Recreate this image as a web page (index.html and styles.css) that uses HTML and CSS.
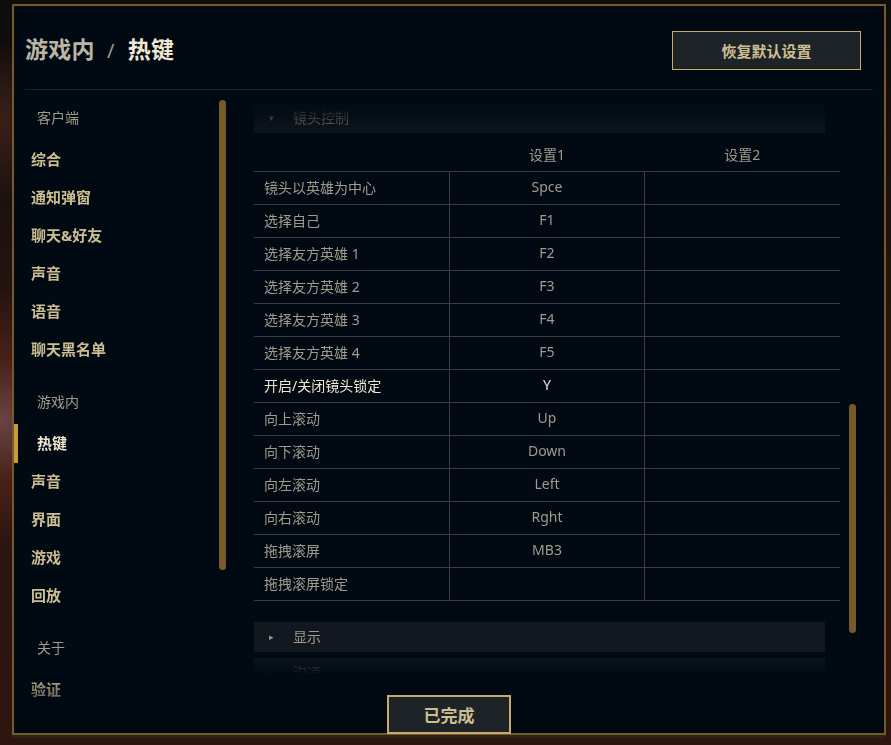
FILE: index.html
```html
<!DOCTYPE html>
<html lang="zh">

<head>
    <meta charset="UTF-8">
    <title>游戏内 / 热键</title>
    <link rel="stylesheet" href="styles.css">
</head>

<body>
    <div class="dialog">
        <header class="top">
            <h1><span class="crumb">游戏内</span><span class="sep">/</span><span class="current">热键</span></h1>
            <button class="btn-reset">恢复默认设置</button>
        </header>

        <div class="main">
            <nav class="side">
                <div class="side-list">
                    <div class="group">
                        <div class="group-title">客户端</div>
                        <div class="item">综合</div>
                        <div class="item">通知弹窗</div>
                        <div class="item">聊天&amp;好友</div>
                        <div class="item">声音</div>
                        <div class="item">语音</div>
                        <div class="item">聊天黑名单</div>
                    </div>
                    <div class="group">
                        <div class="group-title">游戏内</div>
                        <div class="item active">热键</div>
                        <div class="item">声音</div>
                        <div class="item">界面</div>
                        <div class="item">游戏</div>
                        <div class="item">回放</div>
                    </div>
                    <div class="group">
                        <div class="group-title">关于</div>
                        <div class="item">验证</div>
                    </div>
                </div>
                <div class="side-scroll"></div>
            </nav>

            <section class="content">
                <div class="content-scroll">
                    <div class="section-bar"><span class="arrow">▾</span>镜头控制</div>
                    <table class="keys">
                        <thead>
                            <tr><th></th><th>设置1</th><th>设置2</th></tr>
                        </thead>
                        <tbody>
                            <tr><td>镜头以英雄为中心</td><td>Spce</td><td></td></tr>
                            <tr><td>选择自己</td><td>F1</td><td></td></tr>
                            <tr><td>选择友方英雄 1</td><td>F2</td><td></td></tr>
                            <tr><td>选择友方英雄 2</td><td>F3</td><td></td></tr>
                            <tr><td>选择友方英雄 3</td><td>F4</td><td></td></tr>
                            <tr><td>选择友方英雄 4</td><td>F5</td><td></td></tr>
                            <tr class="hover"><td>开启/关闭镜头锁定</td><td>Y</td><td></td></tr>
                            <tr><td>向上滚动</td><td>Up</td><td></td></tr>
                            <tr><td>向下滚动</td><td>Down</td><td></td></tr>
                            <tr><td>向左滚动</td><td>Left</td><td></td></tr>
                            <tr><td>向右滚动</td><td>Rght</td><td></td></tr>
                            <tr><td>拖拽滚屏</td><td>MB3</td><td></td></tr>
                            <tr><td>拖拽滚屏锁定</td><td></td><td></td></tr>
                        </tbody>
                    </table>
                    <div class="section-bar closed"><span class="arrow">▸</span>显示</div>
                    <div class="section-bar closed next"><span class="arrow">▸</span>沟通</div>
                </div>
                <div class="content-scrollbar"></div>
            </section>
        </div>

        <button class="btn-done">已完成</button>
    </div>
</body>

</html>
```

FILE: styles.css
```css
body {
    margin: 0;
    width: 891px;
    height: 745px;
    overflow: hidden;
    font-family: "Noto Sans", "Noto Sans CJK SC", sans-serif;
    background:
        radial-gradient(circle at 0 420px, #6a4444 0, #4a2018 60px, transparent 130px),
        radial-gradient(circle at 0 120px, #3a2018 0, transparent 80px),
        linear-gradient(180deg, #0c0c0c 0, #24140f 40%, #2e1510 100%);
}

.dialog {
    position: relative;
    box-sizing: border-box;
    margin: 4px 0 0 12px;
    width: 874px;
    height: 731px;
    border: 2px solid #785a28;
    background: #010a13;
    box-shadow: 0 3px 0 #2c2216;
    display: flex;
    flex-direction: column;
}

/* cabecera */
.top {
    display: flex;
    align-items: center;
    justify-content: space-between;
    height: 83px;
    margin: 0 11px;
    border-bottom: 1px solid #1e2328;
}

.top h1 {
    margin: 0;
    font-size: 23px;
    font-weight: 700;
    letter-spacing: 0.3px;
}

.crumb {
    color: #bbb5a3;
}

.sep {
    color: #a09b8c;
    margin: 0 13px 0 12px;
    font-weight: 400;
    font-size: 20px;
}

.current {
    color: #f0e6d2;
}

.btn-reset {
    width: 189px;
    height: 39px;
    margin-right: 12px;
    margin-top: 5px;
    border: 1px solid #c8aa6e;
    background: #1e2328;
    color: #cdbe91;
    font-family: inherit;
    font-size: 15px;
    font-weight: 700;
}

/* cuerpo */
.main {
    flex: 1;
    display: flex;
    min-height: 0;
}

.side {
    width: 216px;
    display: flex;
}

.side-list {
    flex: 1;
    padding-top: 9px;
    -webkit-mask-image: linear-gradient(#000 calc(100% - 60px), rgba(0, 0, 0, 0.1) calc(100% - 15px));
    mask-image: linear-gradient(#000 calc(100% - 60px), rgba(0, 0, 0, 0.1) calc(100% - 15px));
}

.group {
    margin-bottom: 15px;
}

.group-title {
    height: 38px;
    line-height: 38px;
    margin-bottom: 3px;
    padding-left: 23px;
    font-size: 14px;
    color: #a09b8c;
}

.item {
    position: relative;
    height: 38px;
    line-height: 38px;
    padding-left: 17px;
    font-size: 15px;
    font-weight: 700;
    color: #cdbe91;
}

.item.active {
    padding-left: 23px;
    color: #f0e6d2;
}

.item.active::before {
    content: "";
    position: absolute;
    left: 0;
    top: 0;
    width: 4px;
    height: 39px;
    background: #c89b3c;
}

.side-scroll {
    width: 7px;
    height: 470px;
    margin: 10px 4px 0 0;
    border-radius: 4px;
    background: #785a28;
}

.content {
    flex: 1;
    display: flex;
    margin-left: 24px;
}

.content-scroll {
    width: 586px;
    height: 590px;
    padding-top: 13px;
    box-sizing: border-box;
    overflow: hidden;
    -webkit-mask-image: linear-gradient(transparent 0, rgba(0, 0, 0, 0.25) 25px, #000 50px, #000 calc(100% - 28px), transparent calc(100% - 6px));
    mask-image: linear-gradient(transparent 0, rgba(0, 0, 0, 0.25) 25px, #000 50px, #000 calc(100% - 28px), transparent calc(100% - 6px));
}

.section-bar {
    width: 571px;
    height: 30px;
    line-height: 30px;
    background: #12181f;
    color: #a09b8c;
    font-size: 14px;
}

.section-bar .arrow {
    display: inline-block;
    width: 39px;
    padding-left: 15px;
    box-sizing: border-box;
    font-size: 9px;
    vertical-align: top;
}

.section-bar.closed {
    margin-top: 21px;
}

.section-bar.next {
    margin-top: 6px;
}

.keys {
    width: 586px;
    border-collapse: collapse;
    table-layout: fixed;
    font-size: 14px;
    color: #a09b8c;
}

.keys th {
    height: 38px;
    padding: 4px 0 0;
    box-sizing: border-box;
    font-weight: 400;
    border-bottom: 1px solid #3c3c41;
}

.keys td {
    height: 30px;
    padding: 0 0 2px;
    text-align: center;
    border-bottom: 1px solid #3c3c41;
    border-left: 1px solid #3c3c41;
}

.keys td:first-child {
    text-align: left;
    padding-left: 10px;
    border-left: none;
}

.keys tr.hover td {
    color: #f0e6d2;
}

.content-scrollbar {
    width: 7px;
    height: 229px;
    margin: 314px 0 0 9px;
    border-radius: 4px;
    background: #785a28;
}

/* boton inferior */
.btn-done {
    position: absolute;
    left: 373px;
    bottom: -1px;
    width: 124px;
    height: 39px;
    border: 2px solid #c8aa6e;
    background: #1e2328;
    color: #cdbe91;
    font-family: inherit;
    font-size: 17px;
    font-weight: 700;
}
```
